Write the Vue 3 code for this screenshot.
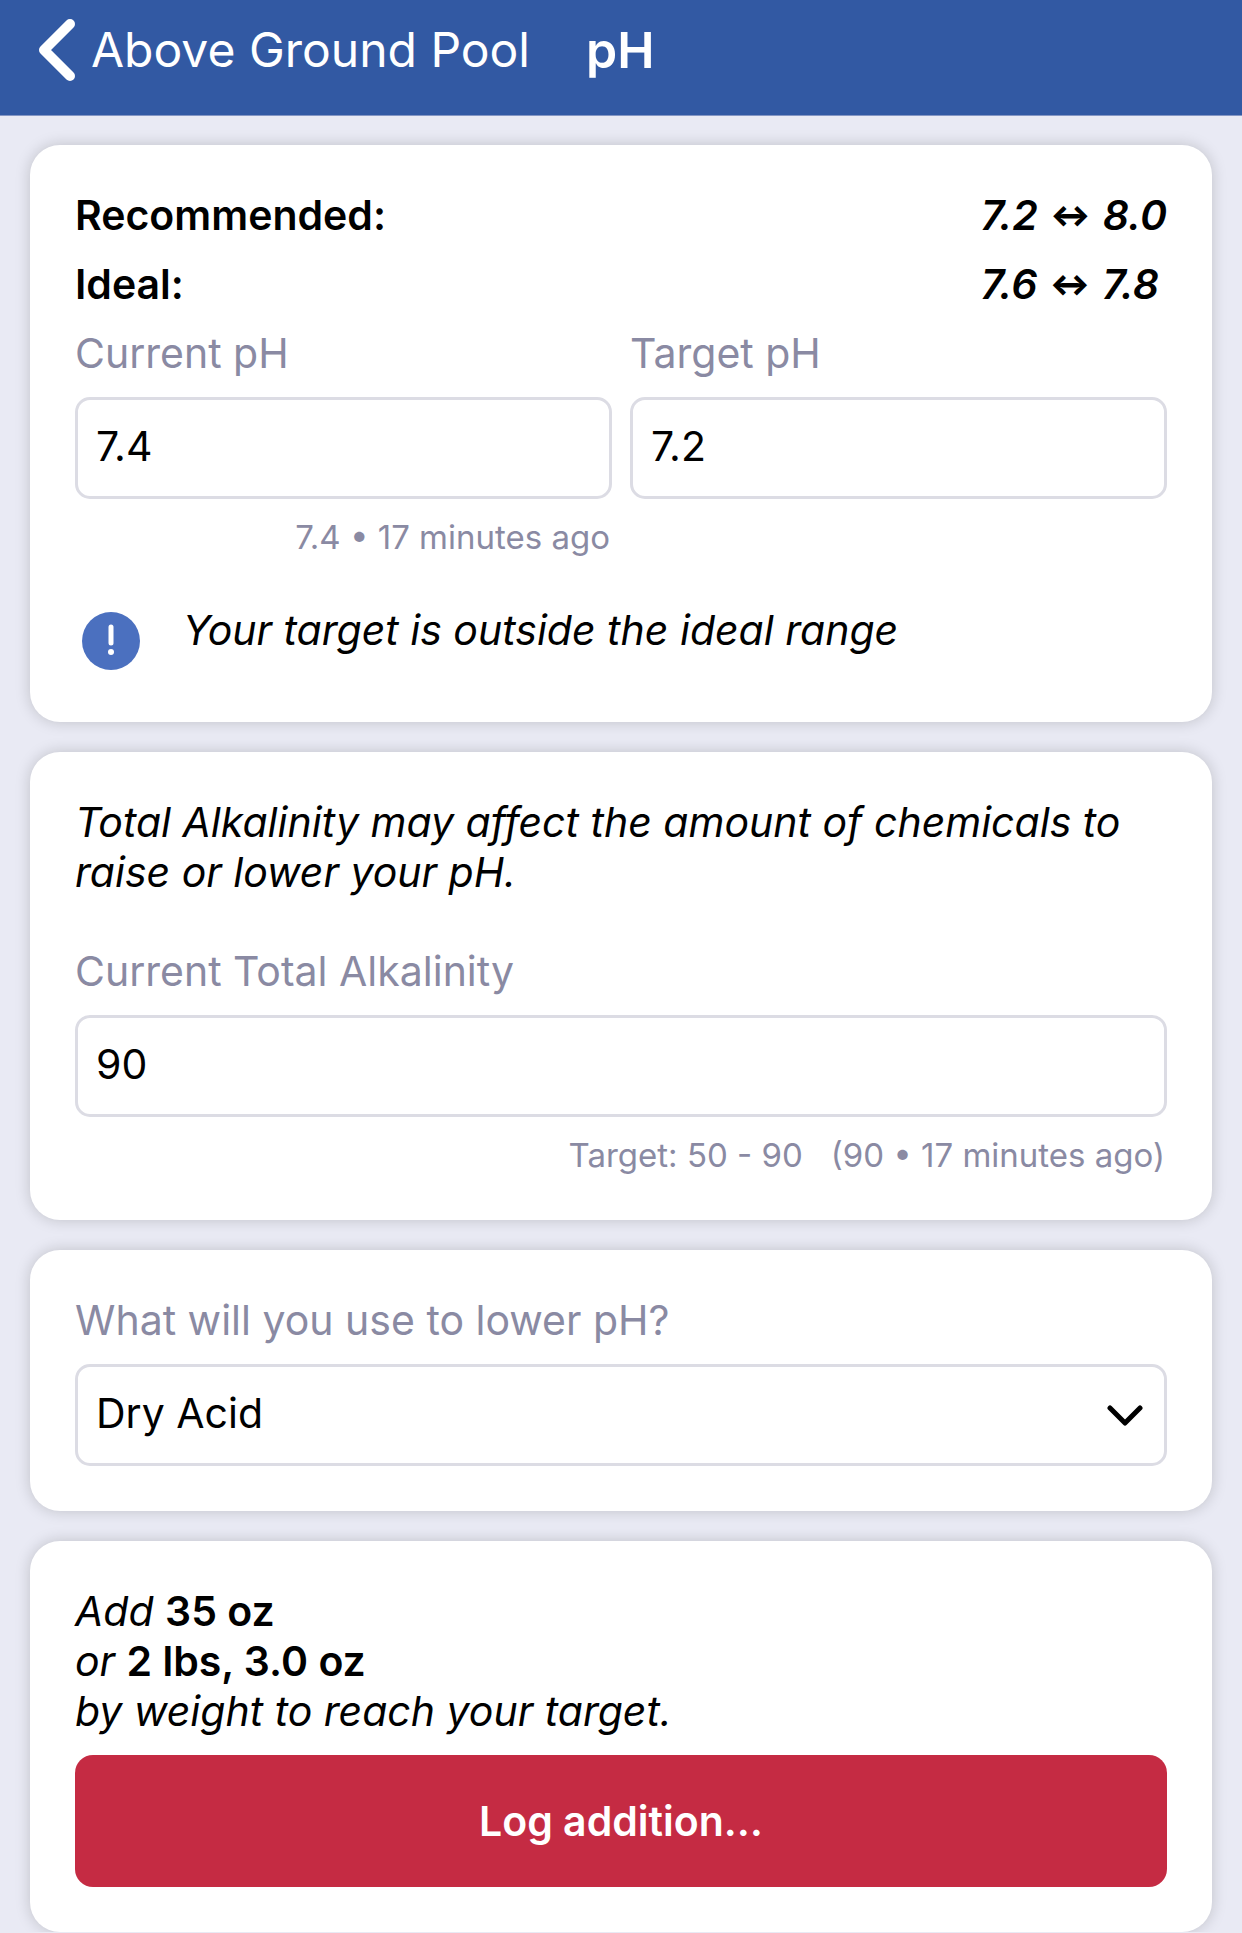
<script setup>
import { ref } from 'vue'

const ranges = [
  { name: 'Recommended:', low: '7.2', high: '8.0' },
  { name: 'Ideal:', low: '7.6', high: '7.8' }
]
const currentPh = ref('7.4')
const targetPh = ref('7.2')
const alkalinity = ref('90')
const chemical = ref('Dry Acid')
const chemicals = ['Dry Acid', 'Muriatic Acid']
</script>

<template>
  <div class="page">
    <header class="bar">
      <a class="back" href="#">
        <svg class="back-icon" viewBox="0 0 38 62" aria-hidden="true">
          <path d="M32 5 L6 31 L32 57" />
        </svg>
        Above Ground Pool
      </a>
      <h1 class="title">pH</h1>
    </header>

    <main class="cards">
      <section class="card">
        <dl class="ranges">
          <template v-for="range in ranges" :key="range.name">
            <dt>{{ range.name }}</dt>
            <dd>{{ range.low }} <span class="arrow">↔</span> {{ range.high }}</dd>
          </template>
        </dl>
        <div class="columns">
          <div class="field">
            <label for="current-ph">Current pH</label>
            <input id="current-ph" v-model="currentPh" class="control" type="text" inputmode="decimal" />
            <p class="hint">7.4 • 17 minutes ago</p>
          </div>
          <div class="field">
            <label for="target-ph">Target pH</label>
            <input id="target-ph" v-model="targetPh" class="control" type="text" inputmode="decimal" />
          </div>
        </div>
        <div class="notice">
          <svg class="notice-icon" viewBox="0 0 72 72" aria-hidden="true">
            <circle cx="36" cy="36" r="29" fill="#4b70bf" />
            <path d="M36 22 V38" stroke="#fff" stroke-width="5" stroke-linecap="round" />
            <circle cx="36" cy="47" r="3" fill="#fff" />
          </svg>
          <p>Your target is outside the ideal range</p>
        </div>
      </section>

      <section class="card">
        <p class="note">Total Alkalinity may affect the amount of chemicals to raise or lower your pH.</p>
        <div class="field">
          <label for="alkalinity">Current Total Alkalinity</label>
          <input id="alkalinity" v-model="alkalinity" class="control" type="text" inputmode="numeric" />
          <p class="hint">Target: 50 - 90 &nbsp; (90 • 17 minutes ago)</p>
        </div>
      </section>

      <section class="card">
        <div class="field">
          <label for="chemical">What will you use to lower pH?</label>
          <div class="picker">
            <select id="chemical" v-model="chemical" class="control">
              <option v-for="item in chemicals" :key="item">{{ item }}</option>
            </select>
            <svg class="picker-icon" viewBox="0 0 36 22" aria-hidden="true">
              <path d="M3 3 L18 18 L33 3" />
            </svg>
          </div>
        </div>
      </section>

      <section class="card">
        <p class="dose">
          Add <strong>35 oz</strong><br />
          or <strong>2 lbs, 3.0 oz</strong><br />
          by weight to reach your target.
        </p>
        <button class="log" type="button">Log addition…</button>
      </section>
    </main>
  </div>
</template>

<style>
body {
  margin: 0;
  background: #e9eaf4;
}
</style>

<style scoped>
.page {
  font-family: Inter, "Liberation Sans", sans-serif;
  font-size: 41px;
  line-height: 50px;
  color: #000;
}

p,
dl,
dd,
h1 {
  margin: 0;
}

.bar {
  display: flex;
  align-items: center;
  gap: 56px;
  padding: 19px 38px 34px;
  border-bottom: 1px solid #8496c4;
  background: #3259a3;
  color: #fff;
  font-size: 48px;
  line-height: 62px;
}

.back {
  display: flex;
  align-items: center;
  gap: 15px;
  color: inherit;
  text-decoration: none;
}

.back-icon {
  width: 38px;
  height: 62px;
  fill: none;
  stroke: #fff;
  stroke-width: 10;
  stroke-linecap: round;
  stroke-linejoin: round;
}

.title {
  font-size: 50px;
  font-weight: 600;
}

.cards {
  display: flex;
  flex-direction: column;
  gap: 30px;
  padding: 29px 30px 0;
}

.card {
  padding: 45px;
  border-radius: 30px;
  background: #fff;
  box-shadow: 0 0 15px rgba(0, 0, 0, 0.18);
}

.ranges {
  display: grid;
  grid-template-columns: 1fr auto;
  row-gap: 19px;
  margin-bottom: 19px;
  font-weight: 600;
}

.ranges dd {
  font-style: italic;
}

.arrow {
  margin: 0 2px;
  font-size: 30px;
  font-style: normal;
  font-weight: 900;
  line-height: 1;
  vertical-align: 4px;
}

.columns {
  display: grid;
  grid-template-columns: 1fr 1fr;
  gap: 18px;
}

.field label {
  display: block;
  margin-bottom: 19px;
  color: #8a8aa3;
}

.control {
  display: block;
  box-sizing: border-box;
  width: 100%;
  height: 102px;
  margin: 0;
  padding: 0 18px 4px;
  border: 3px solid #dcdce4;
  border-radius: 15px;
  background: #fff;
  color: #000;
  font: inherit;
  appearance: none;
}

.hint {
  padding: 18px 2px 0;
  color: #8a8aa3;
  font-size: 33px;
  line-height: 40px;
  text-align: right;
}

.notice {
  display: flex;
  gap: 36px;
  margin-top: 48px;
  font-style: italic;
}

.notice-icon {
  flex: none;
  width: 72px;
  height: 72px;
}

.note {
  margin-bottom: 49px;
  font-style: italic;
}

.picker {
  position: relative;
}

.picker-icon {
  position: absolute;
  top: 41px;
  right: 24px;
  width: 36px;
  height: 22px;
  fill: none;
  stroke: #000;
  stroke-width: 5;
  stroke-linecap: round;
  stroke-linejoin: round;
  pointer-events: none;
}

.dose {
  margin-bottom: 19px;
  font-style: italic;
}

.dose strong {
  font-style: normal;
  font-weight: 600;
}

.log {
  display: block;
  width: 100%;
  height: 132px;
  padding: 0;
  border: 0;
  border-radius: 18px;
  background: #c52b43;
  color: #fff;
  font: inherit;
  font-weight: 600;
}
</style>
